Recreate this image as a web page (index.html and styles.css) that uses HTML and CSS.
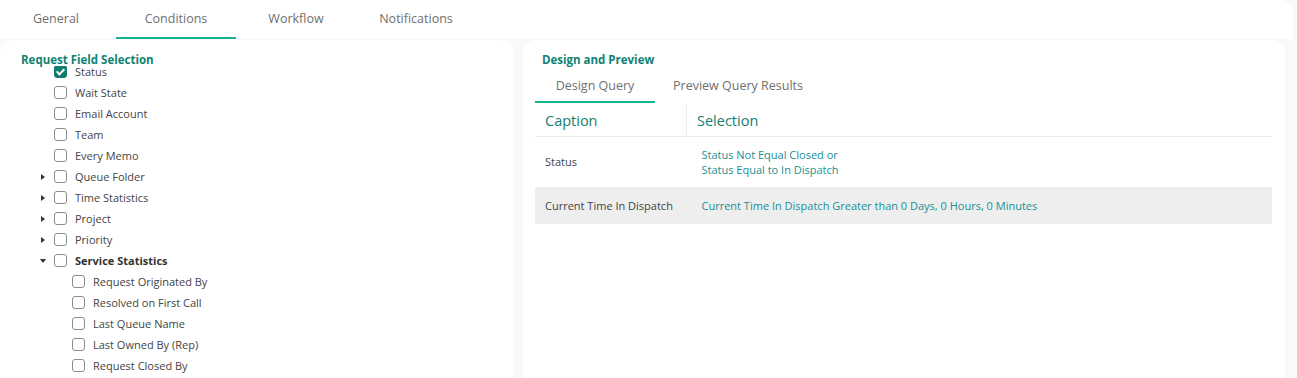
FILE: index.html
```html
<!DOCTYPE html>
<html lang="en">
<head>
  <meta charset="UTF-8" />
  <title>Conditions</title>
  <link rel="stylesheet" href="styles.css">
</head>
<body>

<div class="tab-bar">
  <div class="tab">General</div>
  <div class="tab active">Conditions</div>
  <div class="tab">Workflow</div>
  <div class="tab">Notifications</div>
</div>

<div class="content">
  <div class="panel field-panel">
    <div class="panel-title sticky">Request Field Selection</div>
    <ul class="field-tree">
      <li class="node"><span class="toggle"></span><span class="box checked"></span><span class="label">Status</span></li>
      <li class="node"><span class="toggle"></span><span class="box"></span><span class="label">Wait State</span></li>
      <li class="node"><span class="toggle"></span><span class="box"></span><span class="label">Email Account</span></li>
      <li class="node"><span class="toggle"></span><span class="box"></span><span class="label">Team</span></li>
      <li class="node"><span class="toggle"></span><span class="box"></span><span class="label">Every Memo</span></li>
      <li class="node"><span class="toggle closed"></span><span class="box"></span><span class="label">Queue Folder</span></li>
      <li class="node"><span class="toggle closed"></span><span class="box"></span><span class="label">Time Statistics</span></li>
      <li class="node"><span class="toggle closed"></span><span class="box"></span><span class="label">Project</span></li>
      <li class="node"><span class="toggle closed"></span><span class="box"></span><span class="label">Priority</span></li>
      <li class="node"><span class="toggle open"></span><span class="box"></span><span class="label bold">Service Statistics</span></li>
      <li class="node child"><span class="box"></span><span class="label">Request Originated By</span></li>
      <li class="node child"><span class="box"></span><span class="label">Resolved on First Call</span></li>
      <li class="node child"><span class="box"></span><span class="label">Last Queue Name</span></li>
      <li class="node child"><span class="box"></span><span class="label">Last Owned By (Rep)</span></li>
      <li class="node child"><span class="box"></span><span class="label">Request Closed By</span></li>
    </ul>
  </div>

  <div class="panel preview-panel">
    <div class="panel-title">Design and Preview</div>
    <div class="sub-tabs">
      <div class="sub-tab active">Design Query</div>
      <div class="sub-tab">Preview Query Results</div>
    </div>
    <table class="query-table">
      <thead>
        <tr>
          <th class="col-caption">Caption</th>
          <th class="col-selection">Selection</th>
        </tr>
      </thead>
      <tbody>
        <tr>
          <td class="col-caption">Status</td>
          <td class="col-selection">Status Not Equal Closed or<br>Status Equal to In Dispatch</td>
        </tr>
        <tr class="shaded">
          <td class="col-caption">Current Time In Dispatch</td>
          <td class="col-selection">Current Time In Dispatch Greater than 0 Days, 0 Hours, 0 Minutes</td>
        </tr>
      </tbody>
    </table>
  </div>
</div>

</body>
</html>
```

FILE: styles.css
```css
body {
  margin: 0;
  font-family: "Open Sans", Arial, sans-serif;
  background: #f9f9f9;
  color: #444;
  height: 378px;
  overflow: hidden;
}

.tab-bar {
  display: flex;
  height: 39px;
  width: 1293px;
  background: #fff;
  border-top-right-radius: 14px;
}

.tab {
  width: 120px;
  text-align: center;
  font-size: 12.5px;
  color: #6f6f6f;
  line-height: 37px;
  border-bottom: 2px solid transparent;
}

.tab:first-child {
  margin-left: -4px;
}

.tab.active {
  border-bottom-color: #14b48e;
}

.content {
  display: flex;
  gap: 9px;
  padding-top: 1px;
  width: 1285px;
}

.panel {
  background: #fff;
  border-radius: 14px 14px 0 0;
  height: 338px;
  overflow: hidden;
}

.field-panel {
  width: 514px;
}

.preview-panel {
  flex: 1;
  padding: 0 13px 0 12px;
}

.panel-title {
  font-weight: 700;
  font-size: 11.5px;
  color: #108273;
  padding-top: 13px;
  line-height: 14px;
}

.field-panel .panel-title {
  padding-left: 21px;
}

.preview-panel .panel-title {
  padding-left: 7px;
}

.sticky {
  position: sticky;
  top: 0;
  background: #fff;
  z-index: 1;
  height: 13px;
}

.field-tree {
  list-style: none;
  margin: -5px 0 0;
  padding: 0 0 0 38px;
}

.node {
  display: flex;
  align-items: center;
  height: 21px;
  font-size: 11px;
}

.node.child {
  padding-left: 34px;
}

.toggle {
  width: 16px;
  height: 21px;
  position: relative;
}

.toggle.closed::after {
  content: "";
  position: absolute;
  left: 3px;
  top: 8px;
  border-left: 4px solid #333;
  border-top: 3px solid transparent;
  border-bottom: 3px solid transparent;
}

.toggle.open::after {
  content: "";
  position: absolute;
  left: 2px;
  top: 9px;
  border-top: 4px solid #333;
  border-left: 3px solid transparent;
  border-right: 3px solid transparent;
}

.box {
  width: 11px;
  height: 11px;
  border: 1px solid #8c8c8c;
  border-radius: 3px;
  margin-right: 8px;
  position: relative;
  flex-shrink: 0;
}

.box.checked {
  background: #137d6f;
  border-color: #137d6f;
}

.box.checked::after {
  content: "";
  position: absolute;
  left: 3px;
  top: 1px;
  width: 3px;
  height: 6px;
  border: solid #fff;
  border-width: 0 2px 2px 0;
  transform: rotate(45deg);
}

.label.bold {
  font-weight: 700;
  color: #333;
}

.sub-tabs {
  display: flex;
  margin-top: 4px;
}

.sub-tab {
  padding: 0 18px;
  font-size: 12.5px;
  color: #6f6f6f;
  line-height: 30px;
  border-bottom: 2px solid transparent;
}

.sub-tab.active {
  min-width: 84px;
  text-align: center;
  border-bottom-color: #14b48e;
}

.query-table {
  width: 100%;
  border-collapse: collapse;
  margin-top: 1px;
}

.query-table th {
  text-align: left;
  font-weight: 500;
  font-size: 14.5px;
  color: #14806f;
  height: 32px;
  padding: 0;
  border-bottom: 1px solid #ececec;
}

.query-table th.col-caption {
  width: 141px;
  padding-left: 10px;
  border-right: 1px solid #ececec;
}

.query-table th.col-selection {
  padding-left: 10px;
}

.query-table td {
  font-size: 11px;
  padding: 0;
  vertical-align: middle;
  line-height: 15px;
}

.query-table td.col-caption {
  padding-left: 10px;
  color: #444;
}

.query-table td.col-selection {
  padding-left: 15px;
  color: #198f96;
}

.query-table tbody tr {
  height: 50px;
}

.query-table tbody tr.shaded {
  height: 37px;
  background: #eeeeee;
}
```
